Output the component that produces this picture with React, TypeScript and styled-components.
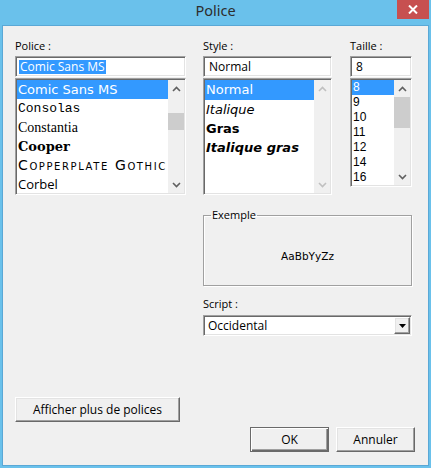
import React from "react";
import styled, { createGlobalStyle, css } from "styled-components";

const Global = createGlobalStyle`
  html, body { margin: 0; padding: 0; background: #ffffff; }
  body { font-family: "Open Sans", "Noto Sans", sans-serif; }
  * { box-sizing: border-box; }
`;

const UI = `"Open Sans", "Noto Sans", sans-serif`;

const sunken = css`
  border-style: solid;
  border-width: 1px;
  border-color: #a0a0a0 #ffffff #ffffff #a0a0a0;
  box-shadow: inset 1px 1px 0 #696969, inset -1px -1px 0 #e3e3e3;
`;

const raised = css`
  border-style: solid;
  border-width: 1px;
  border-color: #ffffff #696969 #696969 #ffffff;
  box-shadow: inset -1px -1px 0 #a0a0a0, inset 1px 1px 0 #e3e3e3;
`;

const Window = styled.div`
  width: 431px;
  height: 468px;
  background: #6ac1eb;
  padding: 0 2px 2px 2px;
  display: flex;
  flex-direction: column;
`;

const TitleBar = styled.div`
  height: 25px;
  flex: none;
  display: grid;
  grid-template-columns: 1fr auto 1fr;
  align-items: start;
`;

const Title = styled.div`
  grid-column: 2;
  font-family: "Noto Sans", sans-serif;
  font-size: 14.5px;
  line-height: 21px;
  color: #2d2d2d;
`;

const CloseButton = styled.div`
  grid-column: 3;
  justify-self: end;
  width: 32px;
  height: 19px;
  background: #c75050;
  display: flex;
  align-items: center;
  justify-content: center;
`;

const Client = styled.div`
  flex: 1;
  background: #f0f0f0;
  border: 1px solid #5aa8d6;
  padding: 12px 16px 0 12px;
  display: flex;
  flex-direction: column;
  font-family: ${UI};
  font-size: 11px;
  color: #000;
`;

const TopRow = styled.div`
  display: flex;
  gap: 17px;
  align-items: flex-start;
`;

const Column = styled.div<{ $w: number; $ml?: number }>`
  width: ${(p) => p.$w}px;
  margin-left: ${(p) => p.$ml ?? 0}px;
  display: flex;
  flex-direction: column;
`;

const Label = styled.div`
  height: 16px;
  line-height: 16px;
  margin-bottom: 2px;
  white-space: nowrap;
`;

const TextField = styled.div<{ $pl?: number }>`
  ${sunken};
  height: 21px;
  background: #fff;
  padding-left: ${(p) => p.$pl ?? 5}px;
  display: flex;
  align-items: center;
  font-size: 12px;
  margin-bottom: 1px;
  white-space: nowrap;
  overflow: hidden;
`;

const Selected = styled.span`
  background: #3399ff;
  color: #fff;
  line-height: 14px;
  padding: 0 1px;
`;

const ListBox = styled.div<{ $h: number }>`
  ${sunken};
  height: ${(p) => p.$h}px;
  background: #fff;
  padding: 1px;
  display: flex;
  overflow: hidden;
`;

const Items = styled.div`
  flex: 1;
  min-width: 0;
  display: flex;
  flex-direction: column;
  overflow: hidden;
`;

const Item = styled.div<{ $h: number; $sel?: boolean; $pl?: number }>`
  height: ${(p) => p.$h}px;
  line-height: ${(p) => p.$h}px;
  flex: none;
  display: flex;
  align-items: center;
  padding-left: ${(p) => p.$pl ?? 1}px;
  white-space: nowrap;
  overflow: hidden;
  color: ${(p) => (p.$sel ? "#ffffff" : "#000000")};
  background: ${(p) => (p.$sel ? "#3399ff" : "transparent")};
`;

const FontText = styled.span<{ $f: string; $s: number; $b?: boolean; $i?: boolean; $sc?: boolean; $ls?: number }>`
  font-family: ${(p) => p.$f};
  font-size: ${(p) => p.$s}px;
  line-height: inherit;
  font-weight: ${(p) => (p.$b ? 700 : 400)};
  font-style: ${(p) => (p.$i ? "italic" : "normal")};
  font-variant: ${(p) => (p.$sc ? "small-caps" : "normal")};
  letter-spacing: ${(p) => p.$ls ?? 0}px;
`;

const ScrollBar = styled.div`
  width: 16px;
  flex: none;
  background: #f0f0f0;
  display: flex;
  flex-direction: column;
`;

const ScrollArrow = styled.div`
  height: 17px;
  flex: none;
  display: flex;
  align-items: center;
  justify-content: center;
`;

const Track = styled.div`
  flex: 1;
  display: flex;
  flex-direction: column;
`;

const Thumb = styled.div<{ $top: number; $h: number }>`
  margin-top: ${(p) => p.$top}px;
  height: ${(p) => p.$h}px;
  background: #cdcdcd;
`;

const RightBlock = styled.div`
  margin-left: 188px;
  width: 209px;
  display: flex;
  flex-direction: column;
`;

const Group = styled.fieldset`
  margin: 12px 0 0 0;
  padding: 0;
  border: 1px solid #a0a0a0;
  box-shadow: 1px 1px 0 #ffffff, inset 1px 1px 0 #ffffff;
  min-width: 0;
`;

const Legend = styled.legend`
  margin-left: 7px;
  padding: 0 1px;
  line-height: 16px;
  font-size: 11px;
`;

const SampleArea = styled.div`
  height: 70px;
  margin-top: -8px;
  padding-top: 12px;
  display: flex;
  align-items: center;
  justify-content: center;
  font-family: "DejaVu Sans", sans-serif;
  font-size: 10.5px;
  color: #000;
`;

const ScriptLabel = styled(Label)`
  margin-top: 10px;
  margin-bottom: 3px;
`;

const Select = styled.div`
  ${sunken};
  height: 21px;
  background: #fff;
  display: flex;
  align-items: stretch;
  padding: 1px;
  font-size: 12px;
`;

const SelectValue = styled.div`
  flex: 1;
  display: flex;
  align-items: center;
  padding-left: 3px;
`;

const DropButton = styled.div`
  ${raised};
  width: 16px;
  background: #f0f0f0;
  display: flex;
  align-items: center;
  justify-content: center;
`;

const Button = styled.div<{ $w: number; $default?: boolean }>`
  width: ${(p) => p.$w}px;
  height: 25px;
  background: #f0f0f0;
  display: flex;
  align-items: center;
  justify-content: center;
  font-size: 12px;
  ${(p) =>
    p.$default
      ? css`
          border: 1px solid #6a6a6a;
          box-shadow: inset 1px 1px 0 #ffffff, inset -1px -1px 0 #6a6a6a, inset -2px -2px 0 #a0a0a0;
        `
      : raised}
`;

const MoreButton = styled(Button)`
  margin-top: 61px;
`;

const ButtonRow = styled.div`
  margin-top: 5px;
  margin-right: -3px;
  display: flex;
  justify-content: flex-end;
  gap: 7px;
`;

const Chevron = ({ up, color }: { up: boolean; color: string }) => (
  <svg width="9" height="6" viewBox="0 0 9 6">
    <polyline
      points={up ? "1,5 4.5,1.5 8,5" : "1,1 4.5,4.5 8,1"}
      fill="none"
      stroke={color}
      strokeWidth="1.6"
    />
  </svg>
);

const Scroll = ({ disabled, thumbTop, thumbH }: { disabled?: boolean; thumbTop?: number; thumbH?: number }) => {
  const c = disabled ? "#c0c0c0" : "#606060";
  return (
    <ScrollBar>
      <ScrollArrow>
        <Chevron up color={c} />
      </ScrollArrow>
      <Track>{!disabled && <Thumb $top={thumbTop ?? 0} $h={thumbH ?? 17} />}</Track>
      <ScrollArrow>
        <Chevron up={false} color={c} />
      </ScrollArrow>
    </ScrollBar>
  );
};

const fontItems = [
  { t: "Comic Sans MS", f: `"Comic Sans MS", "DejaVu Sans", sans-serif`, s: 13 },
  { t: "Consolas", f: `"Liberation Mono", monospace`, s: 13 },
  { t: "Constantia", f: `"Liberation Serif", serif`, s: 14 },
  { t: "Cooper", f: `"DejaVu Serif", serif`, s: 13, b: true },
  { t: "Copperplate Gothic", f: `"DejaVu Sans", sans-serif`, s: 14, sc: true, ls: 1.6 },
  { t: "Corbel", f: `"Open Sans", sans-serif`, s: 13 },
];

const styleItems = [
  { t: "Normal" },
  { t: "Italique", i: true },
  { t: "Gras", b: true },
  { t: "Italique gras", i: true, b: true },
];

const sizes = ["8", "9", "10", "11", "12", "14", "16"];

export default function App() {
  return (
    <>
      <Global />
      <Window>
        <TitleBar>
          <Title>Police</Title>
          <CloseButton>
            <svg width="10" height="9" viewBox="0 0 10 9">
              <path d="M1 0.5 L9 8.5 M9 0.5 L1 8.5" stroke="#ffffff" strokeWidth="2" />
            </svg>
          </CloseButton>
        </TitleBar>
        <Client>
          <TopRow>
            <Column $w={171}>
              <Label>Police :</Label>
              <TextField $pl={3}>
                <Selected>Comic Sans MS</Selected>
              </TextField>
              <ListBox $h={117}>
                <Items>
                  {fontItems.map((it, i) => (
                    <Item key={it.t} $h={19} $sel={i === 0}>
                      <FontText $f={it.f} $s={it.s} $b={it.b} $sc={it.sc} $ls={it.ls}>
                        {it.t}
                      </FontText>
                    </Item>
                  ))}
                </Items>
                <Scroll thumbTop={16} thumbH={17} />
              </ListBox>
            </Column>
            <Column $w={129}>
              <Label>Style :</Label>
              <TextField>Normal</TextField>
              <ListBox $h={117}>
                <Items>
                  {styleItems.map((it, i) => (
                    <Item key={it.t} $h={i === 0 ? 20 : 19} $sel={i === 0}>
                      <FontText $f={`"Comic Sans MS", "DejaVu Sans", sans-serif`} $s={13} $b={it.b} $i={it.i}>
                        {it.t}
                      </FontText>
                    </Item>
                  ))}
                </Items>
                <Scroll disabled />
              </ListBox>
            </Column>
            <Column $w={62} $ml={1}>
              <Label>Taille :</Label>
              <TextField>8</TextField>
              <ListBox $h={109}>
                <Items>
                  {sizes.map((s, i) => (
                    <Item key={s} $h={15} $sel={i === 0} $pl={1}>
                      <FontText $f={`"Liberation Sans", Arial, sans-serif`} $s={12}>
                        {s}
                      </FontText>
                    </Item>
                  ))}
                </Items>
                <Scroll thumbTop={0} thumbH={31} />
              </ListBox>
            </Column>
          </TopRow>
          <RightBlock>
            <Group>
              <Legend>Exemple</Legend>
              <SampleArea>AaBbYyZz</SampleArea>
            </Group>
            <ScriptLabel>Script :</ScriptLabel>
            <Select>
              <SelectValue>Occidental</SelectValue>
              <DropButton>
                <svg width="7" height="4" viewBox="0 0 7 4">
                  <polygon points="0,0 7,0 3.5,4" fill="#000" />
                </svg>
              </DropButton>
            </Select>
          </RightBlock>
          <MoreButton $w={165}>Afficher plus de polices</MoreButton>
          <ButtonRow>
            <Button $w={79} $default>
              OK
            </Button>
            <Button $w={79}>Annuler</Button>
          </ButtonRow>
        </Client>
      </Window>
    </>
  );
}
